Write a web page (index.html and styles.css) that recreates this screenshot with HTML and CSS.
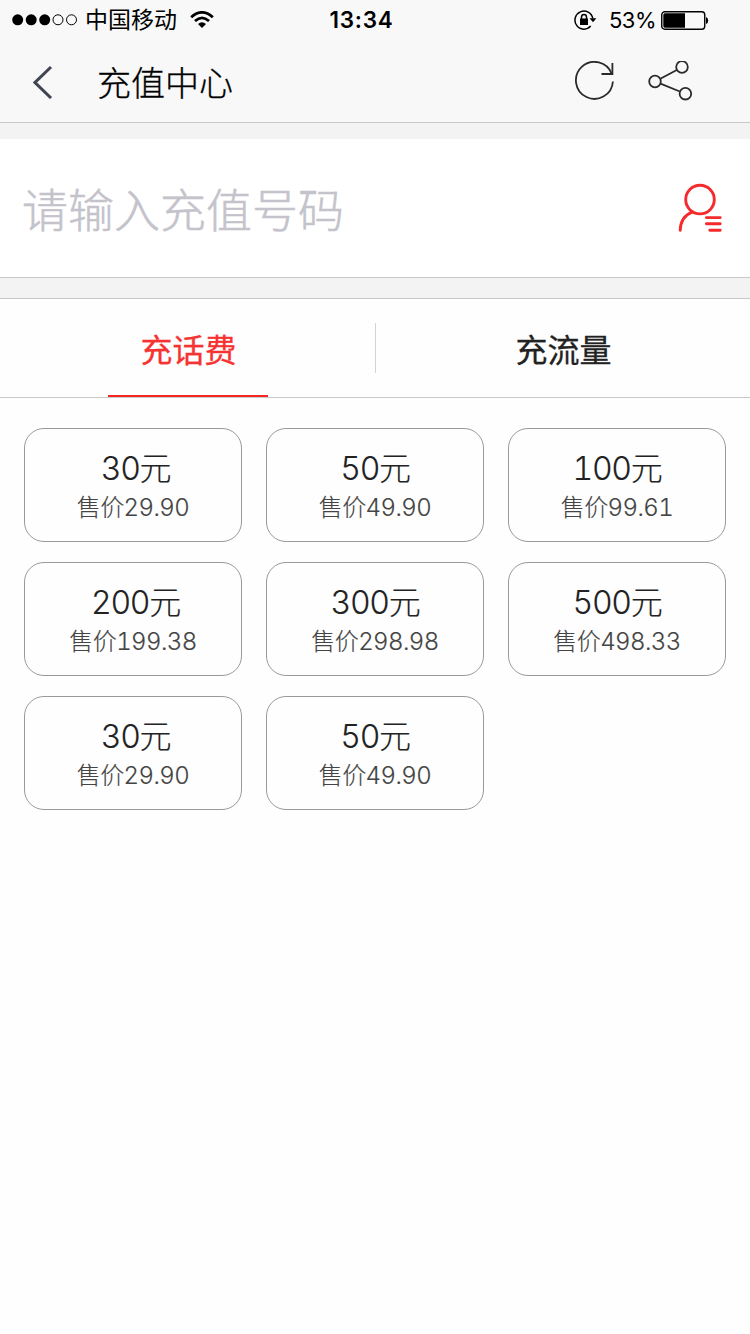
FILE: index.html
```
<!DOCTYPE html>
<html lang="zh-CN">
  <head>
    <meta charset="UTF-8" />
    <meta name="viewport" content="width=device-width, initial-scale=1.0" />
    <title>充值中心</title>
    <link rel="stylesheet" href="styles.css">
  </head>
  <body>
    <header class="header">
      <div class="status-bar">
        <div class="status-left">
          <svg class="signal" width="66" height="12" viewBox="0 0 66 12">
            <circle cx="5.7" cy="5.8" r="5.5" />
            <circle cx="19.2" cy="5.8" r="5.5" />
            <circle cx="32.7" cy="5.8" r="5.5" />
            <circle class="empty" cx="46" cy="5.8" r="5" />
            <circle class="empty" cx="59.5" cy="5.8" r="5" />
          </svg>
          <span class="carrier">中国移动</span>
          <svg class="wifi" width="24" height="18" viewBox="0 0 24 18">
            <path d="M1.2 6.2Q12 -3.4 22.8 6.2" />
            <path d="M5 10Q12 3.8 19 10" />
            <path class="dot" d="M8 13Q12 9.7 16 13L12 17Z" />
          </svg>
        </div>
        <span class="time">13:34</span>
        <div class="status-right">
          <svg class="lock" width="24" height="20" viewBox="0 0 24 20">
            <path d="M16.7 16.1A9 9 0 1 1 18.8 8.5" />
            <path class="solid" d="M15.5 8.3H22.4L19 12.2Z" />
            <path class="solid" d="M6 8.5H14V15H6Z" />
            <path d="M7.5 9V7.2A2.5 2.7 0 0 1 12.5 7.2V9" />
          </svg>
          <span class="percent">53%</span>
          <svg class="battery" width="48" height="19" viewBox="0 0 48 19">
            <rect class="shell" x=".75" y=".75" width="43" height="17.5" rx="3" />
            <path d="M4 2.2H24V16.8H4Q2.3 16.8 2.3 15V4Q2.3 2.2 4 2.2Z" />
            <path d="M45 6Q47.2 6.5 47.2 9.5T45 13Z" />
          </svg>
        </div>
      </div>
      <div class="nav-bar">
        <svg class="back" width="20" height="34" viewBox="0 0 20 34">
          <path d="M18 2L2 17.5L18 33" />
        </svg>
        <h1>充值中心</h1>
        <svg class="refresh" width="42" height="42" viewBox="0 0 42 42">
          <path d="M38.9 20.5A18.5 18.5 0 1 1 37.8 13" />
          <path d="M38.4 2V13H27.5" />
        </svg>
        <svg class="share" width="46" height="42" viewBox="0 0 46 42">
          <circle cx="7" cy="20.5" r="5.8" />
          <circle cx="34" cy="6" r="5.8" />
          <circle cx="37.4" cy="32.7" r="5.8" />
          <path d="M12.3 17.8L28.8 9M12.5 22.7L31.8 30.5" />
        </svg>
      </div>
    </header>

    <div class="phone">
      <input type="tel" class="phone-input" placeholder="请输入充值号码" />
      <svg class="contacts" width="46" height="52" viewBox="0 0 46 52">
        <circle cx="22" cy="16.6" r="14.3" />
        <path d="M14.4 28.8C6 32.2 2.4 38.2 2.2 47.4" />
        <path d="M28.4 34.6H42.2M28.4 40.7H42.2M31.8 47.2H42.2" />
      </svg>
    </div>

    <div class="tabs">
      <div class="tab active"><span>充话费</span></div>
      <div class="tab"><span>充流量</span></div>
    </div>

    <div class="amounts">
      <div class="card"><p class="amount">30元</p><p class="price">售价29.90</p></div>
      <div class="card"><p class="amount">50元</p><p class="price">售价49.90</p></div>
      <div class="card"><p class="amount">100元</p><p class="price">售价99.61</p></div>
      <div class="card"><p class="amount">200元</p><p class="price">售价199.38</p></div>
      <div class="card"><p class="amount">300元</p><p class="price">售价298.98</p></div>
      <div class="card"><p class="amount">500元</p><p class="price">售价498.33</p></div>
      <div class="card"><p class="amount">30元</p><p class="price">售价29.90</p></div>
      <div class="card"><p class="amount">50元</p><p class="price">售价49.90</p></div>
    </div>
  </body>
</html>
```
FILE: styles.css
```
* {
  box-sizing: border-box;
}
body {
  margin: 0;
  min-height: 100vh;
  background-color: #fefefe;
  font-family: Inter, 'Noto Sans CJK SC', sans-serif;
  color: #222;
}
h1,
p {
  margin: 0;
}
svg {
  display: block;
  flex: none;
  fill: none;
}
.header {
  height: 123px;
  background-color: #f8f8f8;
  border-bottom: 1px solid #c8c8c8;
}
.status-bar {
  display: grid;
  grid-template-columns: 1fr auto 1fr;
  align-items: center;
  height: 39px;
  padding: 0 41px 0 12px;
  color: #000;
  font-size: 23px;
  line-height: 39px;
}
.status-left,
.status-right {
  display: flex;
  align-items: center;
}
.status-right {
  justify-content: flex-end;
}
.signal {
  fill: #000;
}
.signal .empty {
  fill: none;
  stroke: #000;
}
.carrier {
  margin: 1px 13px 0 7px;
}
.wifi {
  stroke: #000;
  stroke-width: 2.8;
}
.wifi .dot {
  fill: #000;
  stroke: none;
}
.time {
  padding: 0 0 1px 2px;
  font-size: 22.5px;
  font-weight: 600;
  line-height: 38px;
  letter-spacing: 0.7px;
}
.lock {
  stroke: #000;
  stroke-width: 1.5;
}
.lock .solid {
  fill: #000;
  stroke: none;
}
.percent {
  margin: 0 5px 0 11px;
  font-size: 22px;
  letter-spacing: -0.5px;
}
.battery {
  fill: #000;
}
.battery .shell {
  fill: none;
  stroke: #000;
  stroke-width: 1.4;
}
.nav-bar {
  display: flex;
  align-items: center;
  height: 83px;
  padding: 2px 56px 0 33px;
}
.back {
  stroke: #404552;
  stroke-width: 3;
}
h1 {
  flex: 1;
  margin: 5px 0 0 44px;
  font-size: 34px;
  font-weight: 300;
  -webkit-text-stroke: 0.3px;
  line-height: 48px;
  color: #000;
}
.refresh,
.share {
  stroke: #2a2a2a;
  stroke-width: 1.8;
}
.share {
  margin-left: 32px;
}
.phone {
  display: flex;
  align-items: center;
  justify-content: space-between;
  height: 139px;
  margin-top: 16px;
  padding: 1px 26px 0 22px;
  background-color: #fff;
  border-bottom: 1px solid #c8c8c8;
  box-shadow: 0 -16px #f3f3f3;
}
.phone-input {
  width: 560px;
  padding: 2px 0 0;
  border: 0;
  outline: 0;
  background: none;
  font-family: inherit;
  font-size: 46px;
  font-weight: 300;
}
.phone-input::placeholder {
  color: #c4c3cb;
  -webkit-text-stroke: 0.5px;
}
.contacts {
  stroke: #f42a2d;
  stroke-width: 2.9;
  stroke-linecap: round;
}
.tabs {
  display: grid;
  grid-template-columns: 376px 1fr;
  height: 120px;
  border-top: 20px solid #f3f3f3;
  border-bottom: 1px solid #c8c8c8;
  box-shadow: inset 0 1px #c8c8c8;
}
.tab {
  display: flex;
  justify-content: center;
  height: 99px;
  font-size: 32px;
  -webkit-text-stroke: 0.3px;
  line-height: 105px;
}
.tab span {
  width: 160px;
  padding-left: 1px;
  text-align: center;
}
.tab.active {
  color: #f63333;
  background: linear-gradient(#d4d4d4, #d4d4d4) right center / 1px 50px no-repeat;
}
.tab.active span {
  border-bottom: 2px solid #f42a22;
}
.amounts {
  display: grid;
  grid-template-columns: repeat(3, 218px);
  gap: 20px 24px;
  padding: 30px 24px;
}
.card {
  height: 114px;
  padding-top: 20px;
  border: 1px solid #999;
  border-radius: 20px;
  text-align: center;
  font-weight: 300;
  font-variant-numeric: tabular-nums;
  -webkit-text-stroke: 0.15px;
}
.amount {
  font-size: 32px;
  line-height: 40px;
  letter-spacing: -1.3px;
}
.card:nth-child(3n + 1) .amount {
  padding-left: 5px;
}
.price {
  font-size: 24px;
  line-height: 38px;
  letter-spacing: -0.6px;
  color: #444;
}
```
